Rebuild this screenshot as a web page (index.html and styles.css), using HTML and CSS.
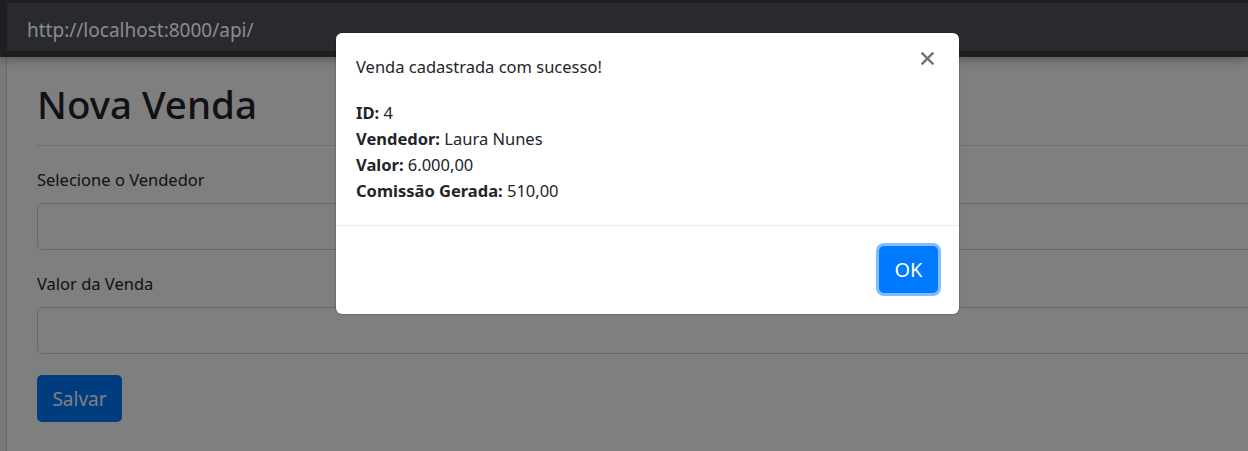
FILE: index.html
```html
<!DOCTYPE html>
<html lang="pt-BR">
<head>
<meta charset="utf-8">
<title>Nova Venda</title>
<link rel="stylesheet" href="styles.css">
</head>
<body>
<div class="window">
  <div class="addressbar"><span class="url">http://localhost:8000/api/</span></div>
  <div class="viewport">
    <div class="gutter"></div>
    <main class="page">
      <h1 class="title">Nova Venda</h1>
      <hr class="rule">
      <form class="form">
        <div class="group">
          <label class="label">Selecione o Vendedor</label>
          <div class="control"></div>
        </div>
        <div class="group">
          <label class="label">Valor da Venda</label>
          <div class="control"></div>
        </div>
        <button type="button" class="btn-save">Salvar</button>
      </form>
    </main>
    <div class="backdrop"></div>
  </div>
  <div class="dialog">
    <button type="button" class="close" aria-label="Fechar">
      <svg width="13" height="13" viewBox="0 0 13 13"><path d="M1.5 1.5 L11.5 11.5 M11.5 1.5 L1.5 11.5" stroke="#707070" stroke-width="2.4" stroke-linecap="square"/></svg>
    </button>
    <div class="dialog-body">
      <p class="msg">Venda cadastrada com sucesso!</p>
      <div class="details">
        <div><b>ID:</b> 4</div>
        <div><b>Vendedor:</b> Laura Nunes</div>
        <div><b>Valor:</b> 6.000,00</div>
        <div><b>Comissão Gerada:</b> 510,00</div>
      </div>
    </div>
    <div class="dialog-footer">
      <button type="button" class="btn-ok">OK</button>
    </div>
  </div>
</div>
</body>
</html>
```

FILE: styles.css
```css
* { box-sizing: border-box; }
html, body { margin: 0; padding: 0; }
body {
  width: 1248px;
  height: 451px;
  overflow: hidden;
  font-family: "Noto Sans", "Open Sans", sans-serif;
  color: #212529;
  background: #808080;
}
.window {
  position: relative;
  width: 1248px;
  height: 451px;
  display: flex;
  flex-direction: column;
}
.addressbar {
  height: 57px;
  flex: none;
  background: #292a2e;
  border-top: 3px solid #1e1f22;
  border-left: 7px solid #1e1f22;
  border-bottom: 6px solid #1d1e21;
  padding: 12px 0 0 20px;
  position: relative;
  z-index: 2;
  box-shadow: 0 2px 10px rgba(0,0,0,0.35);
}
.url {
  display: block;
  font-size: 19px;
  line-height: 30px;
  color: #8c8c8e;
}
.viewport {
  position: relative;
  flex: 1;
  display: flex;
  background: #fff;
  overflow: hidden;
}
.gutter {
  width: 7px;
  flex: none;
  background: #f2f2f2;
  border-right: 1px solid #d4d4d4;
}
.page {
  flex: none;
  width: 1400px;
  padding: 23px 0 0 30px;
}
.title {
  margin: 0;
  font-size: 38.5px;
  line-height: 48px;
  font-weight: 500;
  color: #212529;
}
.rule {
  margin: 17px 0 0;
  border: 0;
  border-top: 1px solid rgba(0,0,0,0.12);
}
.form { padding-top: 21px; }
.group { margin-bottom: 21px; }
.label {
  display: block;
  font-size: 16.5px;
  line-height: 26px;
  margin-bottom: 10px;
}
.control {
  height: 47px;
  border: 1px solid #ced4da;
  border-radius: 5px;
  background: #fff;
}
.btn-save {
  height: 47px;
  width: 85px;
  border: 0;
  border-radius: 5px;
  background: #007bff;
  color: #fff;
  font-family: inherit;
  font-size: 19px;
  padding: 0;
}
.backdrop {
  position: absolute;
  inset: 0;
  background: rgba(0,0,0,0.5);
}
.dialog {
  position: absolute;
  top: 33px;
  left: 336px;
  width: 623px;
  height: 281px;
  background: #fff;
  border-radius: 6px;
  box-shadow: 0 0 2px rgba(0,0,0,0.5);
  z-index: 3;
  display: flex;
  flex-direction: column;
}
.close {
  position: absolute;
  top: 19px;
  right: 25px;
  width: 13px;
  height: 13px;
  padding: 0;
  border: 0;
  background: none;
  display: flex;
}
.dialog-body {
  padding: 21px 20px 21px 20px;
  border-bottom: 1px solid #e9ecef;
  font-size: 16.5px;
  line-height: 26px;
  color: #212529;
}
.msg { margin: 0 0 20px; }
.details b { font-weight: 700; }
.dialog-footer {
  flex: 1;
  display: flex;
  justify-content: flex-end;
  align-items: flex-start;
  padding: 20px 21px 0 0;
}
.btn-ok {
  width: 59px;
  height: 47px;
  border: 0;
  border-radius: 5px;
  background: #007bff;
  color: #fff;
  font-family: inherit;
  font-size: 20px;
  padding: 0;
  box-shadow: 0 0 0 3px #80bdff;
}
```
